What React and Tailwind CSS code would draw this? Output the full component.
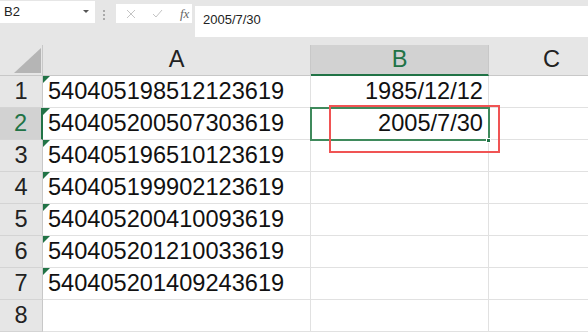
const ROWS = [
  ["540405198512123619", "1985/12/12"],
  ["540405200507303619", "2005/7/30"],
  ["540405196510123619", ""],
  ["540405199902123619", ""],
  ["540405200410093619", ""],
  ["540405201210033619", ""],
  ["540405201409243619", ""],
  ["", ""],
]

const font = { fontFamily: "'Liberation Sans', Arial, sans-serif" }

function FormulaBar() {
  return (
    <div className="h-[45px] bg-[#e6e6e6] relative text-[13px] text-[#222]">
      <div className="absolute left-0 top-[1px] w-[95px] h-[22px] bg-white flex items-center justify-between pl-[4px] pr-[6px]">
        <span>B2</span>
        <svg width="6" height="4" viewBox="0 0 6 4"><path d="M0 0h6L3 3z" fill="#555" /></svg>
      </div>
      <div className="absolute left-[103px] top-[10px] flex flex-col gap-[2px]">
        <div className="w-[2px] h-[2px] bg-[#aaa]" />
        <div className="w-[2px] h-[2px] bg-[#aaa]" />
        <div className="w-[2px] h-[2px] bg-[#aaa]" />
      </div>
      <div className="absolute left-[116px] top-[4px] w-[76px] h-[19px] bg-white flex items-center">
        <svg className="ml-[10px]" width="10" height="10" viewBox="0 0 10 10"><path d="M1 1l8 8M9 1l-8 8" stroke="#c4c4c4" strokeWidth="1" /></svg>
        <svg className="ml-[16px]" width="11" height="9" viewBox="0 0 11 9"><path d="M1 5l3 3 6-7" stroke="#c4c4c4" strokeWidth="1" fill="none" /></svg>
        <span className="ml-[17px] italic text-[13px] text-[#666]" style={{ fontFamily: "'Liberation Serif', serif" }}>fx</span>
      </div>
      <div className="absolute left-[195px] right-0 top-[6px] h-[31px] bg-white pl-[8px] pt-[4px]">2005/7/30</div>
    </div>
  )
}

function CornerTriangle() {
  return (
    <svg className="absolute left-[14px] top-[3px]" width="28" height="26" viewBox="0 0 28 26">
      <path d="M27 0V25H0z" fill="#b5b5b5" />
    </svg>
  )
}

export default function App() {
  return (
    <div className="w-[588px] h-[334px] overflow-hidden bg-white" style={font}>
      <FormulaBar />
      <div className="relative w-[640px]">
        <div className="grid grid-cols-[43px_268px_178px_151px] grid-rows-[31px_repeat(8,32px)] text-[23.6px] leading-none">
          <div className="relative bg-[#e6e6e6] border-r border-b border-[#c8c8c8]">
            <CornerTriangle />
          </div>
          <div className="bg-[#e6e6e6] border-r border-b border-[#c8c8c8] flex items-center justify-center text-[#222]">A</div>
          <div className="bg-[#d2d2d2] border-r border-[#c8c8c8] border-b-2 border-b-[#217346] flex items-center justify-center text-[#217346]">B</div>
          <div className="bg-[#e6e6e6] border-b border-[#c8c8c8] flex items-center justify-start pl-[54px] text-[#222]">C</div>

          {ROWS.map((r, i) => {
            const sel = i === 1
            return [
              <div key={`h${i}`} className={`flex items-center justify-center border-b border-[#d4d4d4] ${sel ? "bg-[#d2d2d2] text-[#217346] border-r-2 border-r-[#217346]" : "bg-[#e6e6e6] text-[#222] border-r border-r-[#c8c8c8]"}`}>
                {i + 1}
              </div>,
              <div key={`a${i}`} className="relative flex items-center pl-[5px] border-r border-b border-[#e1e1e1] text-[#111]">
                {r[0] && (
                  <svg className="absolute left-0 top-0" width="7" height="7" viewBox="0 0 7 7"><path d="M0 0h7L0 7z" fill="#217346" /></svg>
                )}
                {r[0]}
              </div>,
              <div key={`b${i}`} className="flex items-center justify-end pr-[5px] border-r border-b border-[#e1e1e1] text-[#111]">
                {r[1]}
              </div>,
              <div key={`c${i}`} className="border-b border-[#e1e1e1]" />,
            ]
          })}
        </div>

        <div className="absolute left-[310px] top-[62px] w-[180px] h-[34px] border-2 border-[#3f8a5c]" />
        <div className="absolute left-[486px] top-[93px] w-[5px] h-[5px] bg-[#217346] border border-white" />
        <div className="absolute left-[329px] top-[60px] w-[171px] h-[48px] border-2 border-[#f05454]" />
      </div>
    </div>
  )
}
